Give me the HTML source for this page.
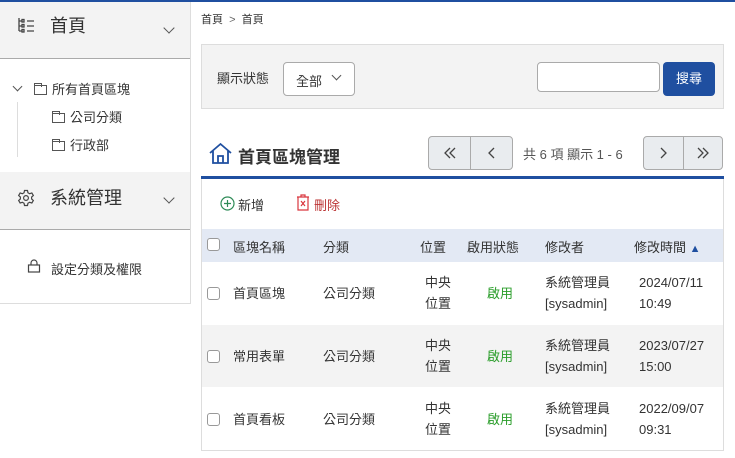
<!DOCTYPE html>
<html><head><meta charset="utf-8"><style>
*{box-sizing:border-box;margin:0;padding:0}
body{width:735px;height:458px;overflow:hidden;background:#fff;font-family:"Liberation Sans","Noto Sans CJK TC",sans-serif;color:#333;position:relative;font-size:13px}
.abs{position:absolute}
.topline{left:0;top:0;width:735px;height:2px;background:#1f4fa0}
.side{left:0;top:2px;width:191px;height:302px;border-right:1px solid #ddd;border-bottom:1px solid #ddd}
.sh{position:absolute;left:0;width:190px;height:57px;background:#f3f3f3;border-bottom:1px solid #aaa;font-size:18px;color:#333}
.chev{position:absolute;width:8px;height:8px;border-right:1.2px solid #555;border-bottom:1.2px solid #555;transform:rotate(45deg)}
.folder{display:inline-block;width:13px;height:10px;border:1px solid #555;vertical-align:-1px;margin-right:5px;position:relative}
.folder:before{content:"";position:absolute;left:-1px;top:-3px;width:6px;height:3px;border:1px solid #555;border-bottom:none}
.btn{border:1px solid #aaa;border-radius:4px;background:#e9ecef;color:#444;display:flex}
.btn div{flex:1;display:flex;align-items:center;justify-content:center}
.cb{position:absolute;width:13px;height:13px;border:1px solid #999;border-radius:3px;background:#fff}
.row{position:absolute;left:202px;width:521px;height:62px}
.row span{position:absolute;line-height:21px;font-size:13px}
</style></head><body>
<div class="abs topline"></div>
<div class="abs side">
 <div class="sh" style="top:0">
  <svg class="abs" style="left:17px;top:15px" width="18" height="16" viewBox="0 0 18 16" fill="none" stroke="#444" stroke-width="1.3"><path d="M2 1v13M2 4h3M2 9h3M2 14h3"/><rect x="5" y="2.5" width="2" height="2.5"/><rect x="5" y="7.5" width="2" height="2.5"/><rect x="5" y="12.5" width="2" height="2.5"/><path d="M10 4h7M10 9h7M10 14h7"/></svg>
  <span class="abs" style="left:50px;top:10px">首頁</span>
  <div class="chev" style="left:165px;top:22px"></div>
 </div>
 <div class="chev" style="left:14px;top:81px;width:7px;height:7px"></div>
 <div class="abs" style="left:34px;top:77px;font-size:13px"><span class="folder"></span>所有首頁區塊</div>
 <div class="abs" style="left:17px;top:100px;width:1px;height:55px;background:#ddd"></div>
 <div class="abs" style="left:52px;top:105px"><span class="folder"></span>公司分類</div>
 <div class="abs" style="left:52px;top:133px"><span class="folder"></span>行政部</div>
 <div class="sh" style="top:170px;height:58px">
  <svg class="abs" style="left:17px;top:17px" width="18" height="18" viewBox="0 0 24 24" fill="none" stroke="#444" stroke-width="1.6"><circle cx="12" cy="12" r="3.2"/><path d="M10 2h4l.6 3 2.3 1.3 2.9-1 2 3.4-2.3 2v2.6l2.3 2-2 3.4-2.9-1-2.3 1.3-.6 3h-4l-.6-3-2.3-1.3-2.9 1-2-3.4 2.3-2v-2.6l-2.3-2 2-3.4 2.9 1L9.4 5z"/></svg>
  <span class="abs" style="left:50px;top:12px">系統管理</span>
  <div class="chev" style="left:165px;top:22px"></div>
 </div>
 <svg class="abs" style="left:27px;top:257px" width="14" height="14" viewBox="0 0 14 14" fill="none" stroke="#444" stroke-width="1.2"><rect x="1.5" y="6" width="11" height="7"/><path d="M4 6V4a3 3 0 0 1 6 0v2"/></svg>
 <div class="abs" style="left:51px;top:257px">設定分類及權限</div>
</div>

<div class="abs" style="left:201px;top:11px;font-size:11px">首頁 &nbsp;<span style="color:#666">&gt;</span>&nbsp; 首頁</div>

<div class="abs" style="left:201px;top:44px;width:523px;height:65px;background:#f3f3f3;border:1px solid #ddd">
 <span class="abs" style="left:15px;top:23px">顯示狀態</span>
 <div class="abs" style="left:81px;top:17px;width:72px;height:34px;border:1px solid #aaa;border-radius:4px;background:#fff;padding:8px 12px">全部</div>
 <div class="chev" style="left:131px;top:27px;width:7px;height:7px"></div>
 <div class="abs" style="left:335px;top:17px;width:123px;height:30px;border:1px solid #aaa;border-radius:4px;background:#fff"></div>
 <div class="abs" style="left:461px;top:17px;width:52px;height:34px;border-radius:4px;background:#1f4fa0;color:#fff;text-align:center;line-height:34px">搜尋</div>
</div>

<svg class="abs" style="left:208px;top:142px" width="25" height="22" viewBox="0 0 25 22" fill="none" stroke="#1f4fa0" stroke-width="1.8"><path d="M2 11L12.5 2 23 11M5 9v12h15V9M10 21v-7h5v7"/></svg>
<div class="abs" style="left:238px;top:143px;font-size:17px;font-weight:bold;color:#333">首頁區塊管理</div>
<div class="abs btn" style="left:428px;top:136px;width:85px;height:34px"><div style="border-right:1px solid #aaa"><svg width="14" height="14" viewBox="0 0 14 14" fill="none" stroke="#444" stroke-width="1.3"><path d="M7 2L2 7l5 5M12 2L7 7l5 5"/></svg></div><div><svg width="10" height="14" viewBox="0 0 10 14" fill="none" stroke="#444" stroke-width="1.3"><path d="M7 2L2 7l5 5"/></svg></div></div>
<div class="abs" style="left:523px;top:144px;color:#555">共 6 項 顯示 1 - 6</div>
<div class="abs btn" style="left:643px;top:136px;width:80px;height:34px"><div style="border-right:1px solid #aaa"><svg width="10" height="14" viewBox="0 0 10 14" fill="none" stroke="#444" stroke-width="1.3"><path d="M3 2l5 5-5 5"/></svg></div><div><svg width="14" height="14" viewBox="0 0 14 14" fill="none" stroke="#444" stroke-width="1.3"><path d="M2 2l5 5-5 5M7 2l5 5-5 5"/></svg></div></div>
<div class="abs" style="left:201px;top:176px;width:523px;height:3px;background:#1f4fa0"></div>

<div class="abs" style="left:201px;top:179px;width:523px;height:272px;border:1px solid #ddd;border-top:none"></div>
<svg class="abs" style="left:220px;top:196px" width="15" height="15" viewBox="0 0 15 15" fill="none" stroke="#2e8b57" stroke-width="1.2"><circle cx="7.5" cy="7.5" r="6.5"/><path d="M7.5 4v7M4 7.5h7"/></svg>
<div class="abs" style="left:238px;top:195px">新增</div>
<svg class="abs" style="left:296px;top:194px" width="14" height="17" viewBox="0 0 14 17" fill="none" stroke="#d9363e" stroke-width="1.2"><path d="M1 3h12M5 3V1h4v2M2 3v13h10V3M5 7l4 5M9 7l-4 5"/></svg>
<div class="abs" style="left:314px;top:195px;color:#b33">刪除</div>

<div class="abs" style="left:202px;top:229px;width:521px;height:33px;background:#e3e9f4"></div>
<div class="cb" style="left:207px;top:238px"></div>
<div class="abs" style="left:233px;top:237px">區塊名稱</div>
<div class="abs" style="left:323px;top:237px">分類</div>
<div class="abs" style="left:420px;top:237px">位置</div>
<div class="abs" style="left:467px;top:237px">啟用狀態</div>
<div class="abs" style="left:545px;top:237px">修改者</div>
<div class="abs" style="left:634px;top:237px">修改時間 <span style="color:#1f4fa0;font-size:11px">▲</span></div>

<div class="row" style="top:262px;background:#fff"><div class="cb" style="left:5px;top:25px"></div><span style="left:31px;top:21px">首頁區塊</span><span style="left:121px;top:21px">公司分類</span><span style="left:223px;top:10px">中央<br>位置</span><span style="left:285px;top:21px;color:#2a9d2a">啟用</span><span style="left:343px;top:10px">系統管理員<br>[sysadmin]</span><span style="left:437px;top:10px">2024/07/11<br>10:49</span></div>
<div class="row" style="top:325px;background:#f3f3f3"><div class="cb" style="left:5px;top:25px"></div><span style="left:31px;top:21px">常用表單</span><span style="left:121px;top:21px">公司分類</span><span style="left:223px;top:10px">中央<br>位置</span><span style="left:285px;top:21px;color:#2a9d2a">啟用</span><span style="left:343px;top:10px">系統管理員<br>[sysadmin]</span><span style="left:437px;top:10px">2023/07/27<br>15:00</span></div>
<div class="row" style="top:388px;background:#fff"><div class="cb" style="left:5px;top:25px"></div><span style="left:31px;top:21px">首頁看板</span><span style="left:121px;top:21px">公司分類</span><span style="left:223px;top:10px">中央<br>位置</span><span style="left:285px;top:21px;color:#2a9d2a">啟用</span><span style="left:343px;top:10px">系統管理員<br>[sysadmin]</span><span style="left:437px;top:10px">2022/09/07<br>09:31</span></div>
</body></html>
